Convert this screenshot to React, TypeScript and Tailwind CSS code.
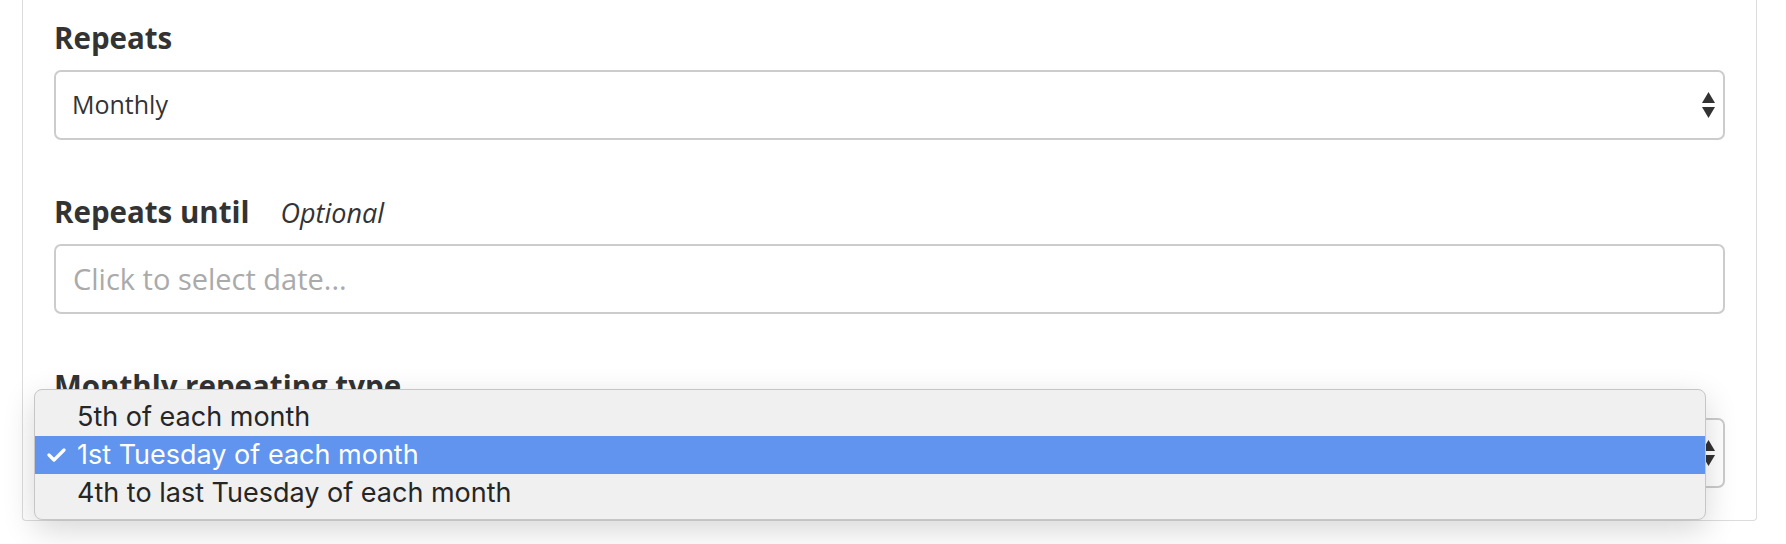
import React from "react";

const labelFont = { fontFamily: '"Open Sans", "Noto Sans", sans-serif' };
const menuFont = { fontFamily: 'Inter, "Liberation Sans", sans-serif' };

function Arrows() {
  return (
    <svg width="13" height="26" viewBox="0 0 13 26" className="absolute right-[8px] top-1/2 -translate-y-1/2">
      <path d="M6.5 0 L13 11 L0 11 Z" fill="#333" />
      <path d="M0 15 L13 15 L6.5 26 Z" fill="#333" />
    </svg>
  );
}

function Field({ label, children }: { label: React.ReactNode; children: React.ReactNode }) {
  return (
    <div className="flex flex-col gap-[12px]">
      <div className="h-[40px] flex items-baseline">{label}</div>
      {children}
    </div>
  );
}

const boxCls = "relative h-[70px] border-2 border-[#cccccc] rounded-[7px] flex items-center";

const options = [
  "5th of each month",
  "1st Tuesday of each month",
  "4th to last Tuesday of each month",
];

export default function App() {
  return (
    <div className="relative w-[1786px] h-[544px] overflow-hidden bg-white" style={labelFont}>
      <div className="ml-[22px] w-[1735px] h-[521px] border border-t-0 border-[#dcdcdc] rounded-b-[4px] px-[31px] pt-[18px] flex flex-col gap-[52px] text-[#333]">
        <Field label={<span className="text-[29.5px] leading-[40px] font-bold">Repeats</span>}>
          <div className={`${boxCls} pl-[16px] text-[25px]`}>
            Monthly
            <Arrows />
          </div>
        </Field>

        <Field
          label={
            <>
              <span className="text-[29.5px] leading-[40px] font-bold">Repeats until</span>
              <span className="ml-[31px] text-[27px] italic">Optional</span>
            </>
          }
        >
          <div className={`${boxCls} pl-[17px] text-[29px] text-[#aaaaaa]`}>Click to select date...</div>
        </Field>

        <Field label={<span className="text-[29.5px] leading-[40px] font-bold">Monthly repeating type</span>}>
          <div className={`${boxCls} pl-[16px] text-[25px]`}>
            1st Tuesday of each month
            <Arrows />
          </div>
        </Field>
      </div>

      {/* open select menu */}
      <div
        className="absolute left-[34px] top-[389px] w-[1672px] h-[131px] bg-[#f0f0f0] border border-[#c6c6c6] rounded-[8px] pt-[8px] flex flex-col shadow-[0_10px_32px_rgba(0,0,0,0.16)] text-[27px] text-[#262626]"
        style={menuFont}
      >
        {options.map((o, i) => (
          <div
            key={o}
            className={
              i === 1
                ? "h-[38px] flex items-center bg-[#6194ee] text-white"
                : "h-[38px] flex items-center"
            }
          >
            <span className="w-[42px] flex justify-center">
              {i === 1 && (
                <svg width="19" height="14" viewBox="0 0 19 14">
                  <path d="M2 7 L7 12 L17 2" fill="none" stroke="white" strokeWidth="3.2" strokeLinecap="round" strokeLinejoin="round" />
                </svg>
              )}
            </span>
            {o}
          </div>
        ))}
      </div>
    </div>
  );
}
